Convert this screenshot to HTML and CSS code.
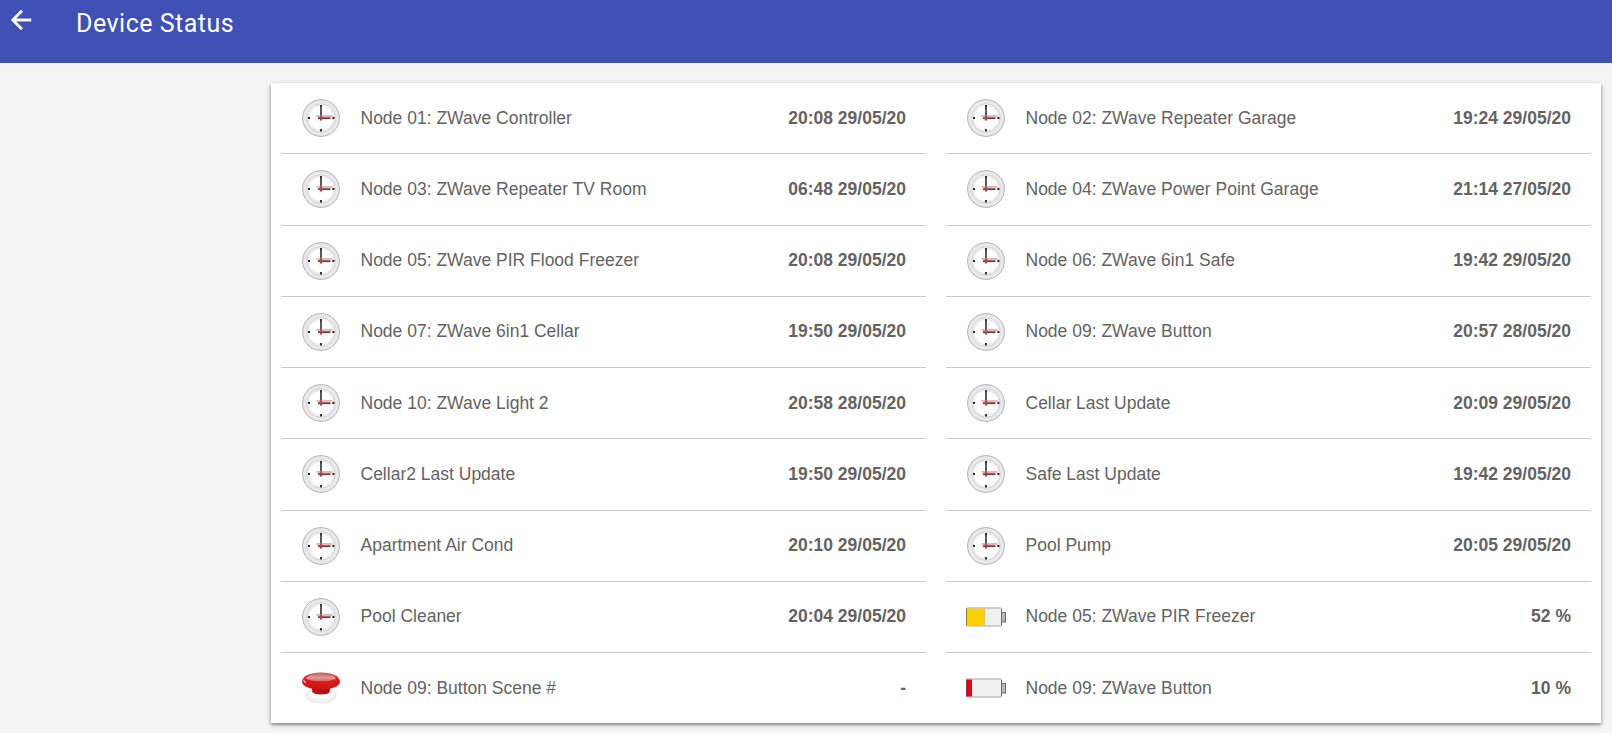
FILE: index.html
```html
<!DOCTYPE html>
<html lang="en">
<head>
    <meta charset="UTF-8">
    <meta name="viewport" content="width=device-width, initial-scale=1.0">
    <title>Device Status</title>
    <link rel="stylesheet" href="styles.css">
</head>
<body>
    <!-- shared icons -->
    <svg class="icon-defs" width="0" height="0">
        <defs>
            <linearGradient id="red-body" x1="0" y1="0" x2="0" y2="1">
                <stop offset="0" stop-color="#d8453f"/>
                <stop offset="0.5" stop-color="#d81c1a"/>
                <stop offset="1" stop-color="#cc1413"/>
            </linearGradient>
            <linearGradient id="red-shine" x1="0" y1="0" x2="0" y2="1">
                <stop offset="0" stop-color="#c8605c"/>
                <stop offset="0.6" stop-color="#e79a96"/>
                <stop offset="1" stop-color="#dc5a56"/>
            </linearGradient>
        </defs>
        <symbol id="clock" viewBox="0 0 40 40">
            <circle cx="20" cy="20" r="18.4" fill="#e9e9eb" stroke="#b4b4b6" stroke-width="1"/>
            <circle cx="20" cy="20" r="14.2" fill="#fff" stroke="#c6c6c8" stroke-width="0.8"/>
            <circle cx="20" cy="20" r="12.6" fill="none" stroke="#c4c4c4" stroke-width="1.2" stroke-dasharray="0.5 0.82"/>
            <path d="M20 7v2.4M20 31v2.4M7 20h2M31.4 20h2" stroke="#222" stroke-width="1.8"/>
            <path d="M20 8v14.5" stroke="#3c3c3e" stroke-width="1.7"/>
            <path d="M17 20.2h12.5" stroke="#5a4040" stroke-width="1.8"/>
            <path d="M15.5 18h16" stroke="#dc7878" stroke-width="1.1"/>
            <circle cx="20" cy="20" r="1.8" fill="#b8404a"/>
        </symbol>
        <symbol id="button" viewBox="0 0 40 40">
            <ellipse cx="20" cy="27.5" rx="15" ry="7.5" fill="#f3f3f3" stroke="#e0e0e0" stroke-width="0.8"/>
            <ellipse cx="20" cy="25.5" rx="12" ry="4.5" fill="#fff"/>
            <path d="M10.5 18h19l-1 6.5c-2.5 2.6-14.5 2.6-17 0z" fill="#b31214"/>
            <path d="M1 14C1 8 9 4.5 20 4.5S39 8 39 14c0 4-8 7.500-19 7.500S1 18 1 14z" fill="url(#red-body)"/>
            <path d="M5 10.5C7 7 13 5 20 5s13 2 15 5.500c-3 2-9 2.800-15 2.800S8 12.500 5 10.500z" fill="url(#red-shine)"/>
            <path d="M2.5 12.5l2.200 2.300" stroke="#f3b5b2" stroke-width="1.5"/>
        </symbol>
    </svg>

    <header class="header">
        <svg class="back-btn" viewBox="0 0 24 24"><path d="M20 11H7.830l5.590-5.590L12 4l-8 8 8 8 1.410-1.410L7.830 13H20v-2z" fill="#fff" stroke="#fff" stroke-width="0.3"/></svg>
        <h1>Device Status</h1>
    </header>

    <main class="card">
        <div class="row"><svg class="icon"><use href="#clock"/></svg><span class="label">Node 01: ZWave Controller</span><span class="value">20:08 29/05/20</span></div>
        <div class="row"><svg class="icon"><use href="#clock"/></svg><span class="label">Node 02: ZWave Repeater Garage</span><span class="value">19:24 29/05/20</span></div>
        <div class="row"><svg class="icon"><use href="#clock"/></svg><span class="label">Node 03: ZWave Repeater TV Room</span><span class="value">06:48 29/05/20</span></div>
        <div class="row"><svg class="icon"><use href="#clock"/></svg><span class="label">Node 04: ZWave Power Point Garage</span><span class="value">21:14 27/05/20</span></div>
        <div class="row"><svg class="icon"><use href="#clock"/></svg><span class="label">Node 05: ZWave PIR Flood Freezer</span><span class="value">20:08 29/05/20</span></div>
        <div class="row"><svg class="icon"><use href="#clock"/></svg><span class="label">Node 06: ZWave 6in1 Safe</span><span class="value">19:42 29/05/20</span></div>
        <div class="row"><svg class="icon"><use href="#clock"/></svg><span class="label">Node 07: ZWave 6in1 Cellar</span><span class="value">19:50 29/05/20</span></div>
        <div class="row"><svg class="icon"><use href="#clock"/></svg><span class="label">Node 09: ZWave Button</span><span class="value">20:57 28/05/20</span></div>
        <div class="row"><svg class="icon"><use href="#clock"/></svg><span class="label">Node 10: ZWave Light 2</span><span class="value">20:58 28/05/20</span></div>
        <div class="row"><svg class="icon"><use href="#clock"/></svg><span class="label">Cellar Last Update</span><span class="value">20:09 29/05/20</span></div>
        <div class="row"><svg class="icon"><use href="#clock"/></svg><span class="label">Cellar2 Last Update</span><span class="value">19:50 29/05/20</span></div>
        <div class="row"><svg class="icon"><use href="#clock"/></svg><span class="label">Safe Last Update</span><span class="value">19:42 29/05/20</span></div>
        <div class="row"><svg class="icon"><use href="#clock"/></svg><span class="label">Apartment Air Cond</span><span class="value">20:10 29/05/20</span></div>
        <div class="row"><svg class="icon"><use href="#clock"/></svg><span class="label">Pool Pump</span><span class="value">20:05 29/05/20</span></div>
        <div class="row"><svg class="icon"><use href="#clock"/></svg><span class="label">Pool Cleaner</span><span class="value">20:04 29/05/20</span></div>
        <div class="row">
            <svg class="icon" viewBox="0 0 40 40">
                <rect x="35.5" y="15.5" width="4" height="9.5" fill="#b9b9bf" stroke="#6a6a70"/>
                <rect x="0.5" y="11" width="35" height="18" rx="0.8" fill="#f0f0f0" stroke="#a4a4a8"/>
                <rect x="1" y="11.5" width="17.5" height="17" fill="#ffd000"/>
                <path d="M18.7 11.5v17" stroke="#d9c060"/>
                <path d="M35.5 12v16" stroke="#6a6a70"/>
                <path d="M0.5 11.5v17" stroke="#8a7a40"/>
            </svg>
            <span class="label">Node 05: ZWave PIR Freezer</span><span class="value">52 %</span>
        </div>
        <div class="row"><svg class="icon"><use href="#button"/></svg><span class="label">Node 09: Button Scene #</span><span class="value">-</span></div>
        <div class="row">
            <svg class="icon" viewBox="0 0 40 40">
                <rect x="35.5" y="15.5" width="4" height="9.5" fill="#b9b9bf" stroke="#6a6a70"/>
                <rect x="0.5" y="11" width="35" height="18" rx="0.8" fill="#f0f0f0" stroke="#a4a4a8"/>
                <rect x="1" y="11.5" width="5" height="17" fill="#e2001a"/>
                <path d="M35.5 12v16" stroke="#6a6a70"/>
                <path d="M0.5 11.5v17" stroke="#8a3a40"/>
            </svg>
            <span class="label">Node 09: ZWave Button</span><span class="value">10 %</span>
        </div>
    </main>
</body>
</html>
```
FILE: styles.css
```css
html {
    background-color: #f4f4f4;
}
body {
    margin: 0;
    min-height: 100vh;
    font-family: Arial, "Liberation Sans", sans-serif;
    color: #636363;
}
.icon-defs {
    display: block;
}
.header {
    display: flex;
    height: 63px;
    box-sizing: border-box;
    padding-left: 6px;
    background-color: #3f51b5;
    color: white;
}
.back-btn {
    width: 30px;
    height: 30px;
    margin-top: 5px;
}
.header h1 {
    margin: 8px 0 0 40px;
    font-family: Roboto, sans-serif;
    font-size: 25px;
    font-weight: 400;
    line-height: 32px;
    letter-spacing: 0.5px;
}
.card {
    display: grid;
    grid-template-columns: 1fr 1fr;
    grid-template-rows: repeat(8, 71.25px) 70px;
    column-gap: 20px;
    width: 1310px;
    margin: 20px 11px 0 auto;
    padding: 0 10px;
    background-color: white;
    box-shadow: 0 2px 3px rgba(0, 0, 0, 0.4), 0 1px 6px rgba(0, 0, 0, 0.12);
}
.row {
    display: flex;
    align-items: center;
    padding: 0 20px;
    /* hairline under each row, kept on whole pixels */
    border-bottom: 1px solid #c8c8c8;
}
.row:nth-last-child(-n+2) {
    border-bottom: none;
}
.icon {
    width: 40px;
    height: 40px;
    margin-right: 19.5px;
}
.label {
    flex: 1;
    font-size: 17.5px;
}
.value {
    font-size: 17.5px;
    font-weight: bold;
}
```
